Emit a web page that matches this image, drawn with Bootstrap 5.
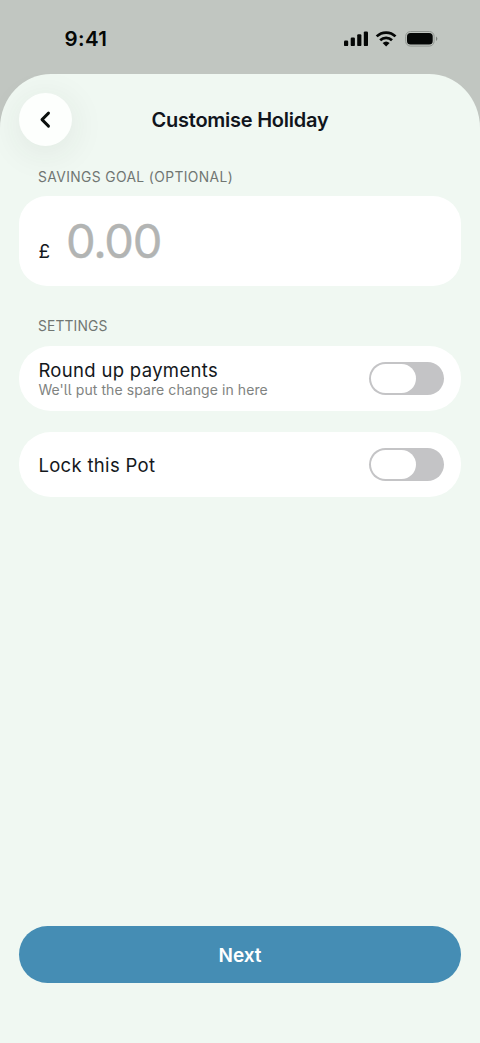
<!DOCTYPE html>
<html lang="en">
<head>
<meta charset="utf-8">
<meta name="viewport" content="width=device-width, initial-scale=1">
<title>Customise Holiday</title>
<link rel="stylesheet" href="https://cdn.jsdelivr.net/npm/bootstrap@5.3.0/dist/css/bootstrap.min.css">
<style>
body{font-family:Inter,"Liberation Sans",sans-serif;background:#c1c6c1;color:#14181c;line-height:1}
.screen{height:1043px;overflow:hidden}
.statusbar{height:74px;padding:3px 42px 0 64.5px;color:#050706}
.clock{font-size:20.5px;font-weight:600;letter-spacing:.4px;padding-top:1px}
.sheet{background:#f0f8f2;border-radius:51px 51px 0 0/54px 54px 0 0;padding:19px 19px 60px}
.topbar{height:53px}
.back{width:53px;height:53px;background:#fdfffd;border:0;padding:0;box-shadow:0 6px 36px rgba(40,50,45,.09);color:#0b100d}
.title{font-size:20px;font-weight:600;letter-spacing:-.25px;color:#10151c}
.label{font-size:13.8px;color:#707672;padding-left:19px;line-height:20px}
.goal-label{margin-top:21px;letter-spacing:.4px}
.settings-label{margin-top:30px;letter-spacing:.15px}
.tile{background:#fff;border-radius:32px;padding:0 17px 0 19.4px;height:65px}
.goal{height:90px;border-radius:28px;padding-top:21px;margin-top:9px}
.pound{font-size:19px;width:27.5px}
.amount{font-size:47px;font-weight:400;color:#b2b4b3;letter-spacing:-1.2px;-webkit-text-stroke:.4px #b2b4b3}
.first{margin-top:9.5px}
.second{margin-top:21px}
.name{font-size:18.5px;line-height:22px;letter-spacing:.32px;padding-top:1px}
.hint{font-size:14px;line-height:18px;color:#808381;letter-spacing:.08px;font-feature-settings:"cv05"}
.toggle{width:75px;height:33px;background:#c4c4c6;padding:2px}
.knob{width:45px;height:29px;background:#fff}
.next{height:57px;background:#458db4;color:#fff;font-size:19px;font-weight:600;border:0;padding-top:9px}
</style>
</head>
<body>
<div class="screen d-flex flex-column">
  <div class="statusbar d-flex align-items-center justify-content-between">
    <span class="clock">9:41</span>
    <svg width="95" height="20" viewBox="0 0 95 20" fill="currentColor" aria-hidden="true">
      <rect x="1" y="11.5" width="4.2" height="5.6" rx="1.2"/><rect x="7.7" y="8.5" width="4.2" height="8.6" rx="1.2"/><rect x="14.2" y="5.3" width="4.2" height="11.8" rx="1.2"/><rect x="20.8" y="2.4" width="4.2" height="14.7" rx="1.2"/>
      <g fill="none" stroke="currentColor" stroke-width="2.7"><path d="M33.7 7.4a13.4 13.4 0 0 1 18.8 0M37.2 11.3a8.4 8.4 0 0 1 11.8 0"/></g>
      <path d="M39.6 14a5.2 5.2 0 0 1 7 0l-3.5 3.5z"/>
      <rect x="62.7" y="2.5" width="28.4" height="14.6" rx="4.8" fill="none" stroke="#929792"/>
      <rect x="64" y="4" width="25.7" height="11.5" rx="3.5"/><path d="M93.1 7.5v4.6q1.2-.8 1.2-2.3t-1.2-2.3" fill="#757a75"/>
    </svg>
  </div>
  <main class="sheet flex-grow-1 d-flex flex-column">
    <header class="topbar position-relative d-flex align-items-center justify-content-center">
      <button class="back rounded-circle position-absolute start-0 top-0 d-flex align-items-center justify-content-center" aria-label="Back">
        <svg width="20" height="20" viewBox="0 0 20 20" fill="none" stroke="currentColor" stroke-width="2.9" stroke-linecap="round" stroke-linejoin="round"><path d="M12.5 3.1 6 9.6l6.5 6.5"/></svg>
      </button>
      <h1 class="title m-0">Customise Holiday</h1>
    </header>
    <div class="label goal-label">SAVINGS GOAL (OPTIONAL)</div>
    <section class="tile goal d-flex align-items-baseline">
      <span class="pound">£</span><span class="amount">0.00</span>
    </section>
    <div class="label settings-label">SETTINGS</div>
    <section class="tile first d-flex align-items-center justify-content-between">
      <div><div class="name">Round up payments</div><div class="hint">We'll put the spare change in here</div></div>
      <div class="toggle rounded-pill" role="switch" aria-checked="false"><div class="knob rounded-pill"></div></div>
    </section>
    <section class="tile second d-flex align-items-center justify-content-between">
      <div class="name">Lock this Pot</div>
      <div class="toggle rounded-pill" role="switch" aria-checked="false"><div class="knob rounded-pill"></div></div>
    </section>
    <button class="next btn rounded-pill w-100 mt-auto">Next</button>
  </main>
</div>
<script src="https://cdn.jsdelivr.net/npm/bootstrap@5.3.0/dist/js/bootstrap.bundle.min.js"></script>
</body>
</html>
